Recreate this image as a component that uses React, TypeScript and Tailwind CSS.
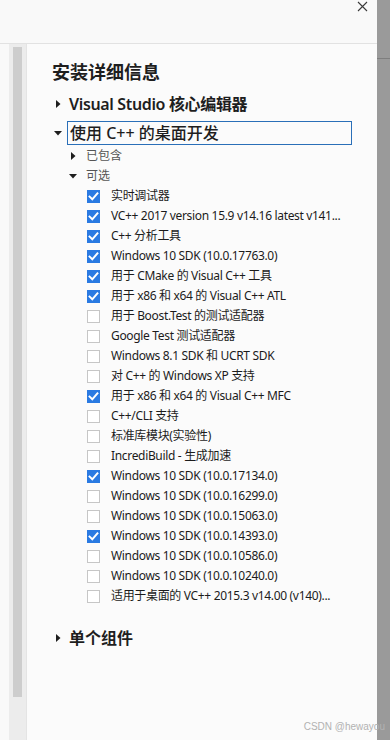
import React from "react";

const FONT = { fontFamily: '"Noto Sans", "Noto Sans CJK SC", sans-serif' };

const items: [string, boolean][] = [
  ["实时调试器", true],
  ["VC++ 2017 version 15.9 v14.16 latest v141...", true],
  ["C++ 分析工具", true],
  ["Windows 10 SDK (10.0.17763.0)", true],
  ["用于 CMake 的 Visual C++ 工具", true],
  ["用于 x86 和 x64 的 Visual C++ ATL", true],
  ["用于 Boost.Test 的测试适配器", false],
  ["Google Test 测试适配器", false],
  ["Windows 8.1 SDK 和 UCRT SDK", false],
  ["对 C++ 的 Windows XP 支持", false],
  ["用于 x86 和 x64 的 Visual C++ MFC", true],
  ["C++/CLI 支持", false],
  ["标准库模块(实验性)", false],
  ["IncrediBuild - 生成加速", false],
  ["Windows 10 SDK (10.0.17134.0)", true],
  ["Windows 10 SDK (10.0.16299.0)", false],
  ["Windows 10 SDK (10.0.15063.0)", false],
  ["Windows 10 SDK (10.0.14393.0)", true],
  ["Windows 10 SDK (10.0.10586.0)", false],
  ["Windows 10 SDK (10.0.10240.0)", false],
  ["适用于桌面的 VC++ 2015.3 v14.00 (v140)...", false],
];

function TriRight() {
  return (
    <svg width="5" height="8" viewBox="0 0 5 8">
      <path d="M0 0 L4.5 4 L0 8 Z" fill="#1e1e1e" />
    </svg>
  );
}
function TriDown() {
  return (
    <svg width="8" height="5" viewBox="0 0 8 5">
      <path d="M0 0 L8 0 L4 4.5 Z" fill="#1e1e1e" />
    </svg>
  );
}

function Check({ on }: { on: boolean }) {
  if (on)
    return (
      <div className="w-[13px] h-[13px] bg-[#2a7ae2] flex items-center justify-center shrink-0">
        <svg width="11" height="11" viewBox="0 0 11 11">
          <path d="M1.6 5.6 L4.3 8.3 L9.4 2.4" stroke="#fff" strokeWidth="2" fill="none" strokeLinecap="square" />
        </svg>
      </div>
    );
  return <div className="w-[13px] h-[13px] border border-[#c6c6c6] bg-white shrink-0" />;
}

export default function App() {
  return (
    <div className="relative w-[390px] h-[740px] bg-[#f9f9f9] overflow-hidden flex" style={FONT}>
      <div className="flex-1 flex flex-col">
        <div className="h-[44px] shrink-0 border-b border-[#e2e2e2] flex justify-end">
          <div className="mr-[9px] mt-[1px]">
            <svg width="11" height="11" viewBox="0 0 11 11">
              <path d="M1 1 L10 10 M10 1 L1 10" stroke="#3a3a3a" strokeWidth="1.1" />
            </svg>
          </div>
        </div>
        <div className="flex flex-1">
          <div className="w-[9px] shrink-0" />
          <div className="w-[17px] shrink-0 bg-[#ececec] pl-[4px] pt-[3px]">
            <div className="w-[9px] h-[650px] bg-[#cdcdcd]" />
          </div>
          <div className="w-px shrink-0 bg-[#e4e4e4]" />
          <div className="flex-1 bg-[#fbfbfb] pt-[16px] text-[#1e1e1e]">
            <div className="h-[24px] flex items-center pl-[25px] text-[18px] font-semibold">安装详细信息</div>
            <div className="h-[24px] mt-[8px] flex items-center pl-[24px]">
              <div className="w-[14px] flex justify-center"><TriRight /></div>
              <span className="ml-[2px] border border-transparent px-[1px] text-[16px] font-semibold leading-[22px] tracking-[-0.35px]">
                Visual Studio 核心编辑器
              </span>
            </div>
            <div className="h-[24px] mt-[5px] flex items-center pl-[24px]">
              <div className="w-[14px] flex justify-center"><TriDown /></div>
              <div className="ml-[2px] w-[285px] h-[24px] border border-[#2a6fb8] px-[2px] flex items-center text-[16px] font-medium">
                使用 C++ 的桌面开发
              </div>
            </div>
            <div className="h-[20px] mt-[1px] flex items-center pl-[39px]">
              <div className="w-[14px] flex justify-center"><TriRight /></div>
              <span className="ml-[6px] text-[12px] text-[#555]">已包含</span>
            </div>
            <div className="h-[20px] flex items-center pl-[39px]">
              <div className="w-[14px] flex justify-center"><TriDown /></div>
              <span className="ml-[6px] text-[12px] text-[#555]">可选</span>
            </div>
            {items.map(([label, on], i) => (
              <div key={i} className="h-[20px] flex items-center pl-[60px]">
                <Check on={on} />
                <span className="ml-[11px] text-[12px] text-[#1b1b1b] whitespace-nowrap tracking-[-0.33px]">{label}</span>
              </div>
            ))}
            <div className="h-[24px] mt-[20px] flex items-center pl-[24px]">
              <div className="w-[14px] flex justify-center"><TriRight /></div>
              <span className="ml-[2px] border border-transparent px-[1px] text-[16px] font-semibold">单个组件</span>
            </div>
          </div>
        </div>
      </div>
      <div className="w-[13px] shrink-0 bg-[#9a9a9a] flex flex-col">
        <div className="h-[58px]" />
        <div className="h-px bg-[#7e7e7e]" />
      </div>
      <div className="absolute right-[5px] bottom-[6px] text-[10px] text-[#b2b2b2]" style={{ fontFamily: '"Liberation Sans", sans-serif' }}>
        CSDN @hewayou
      </div>
    </div>
  );
}
